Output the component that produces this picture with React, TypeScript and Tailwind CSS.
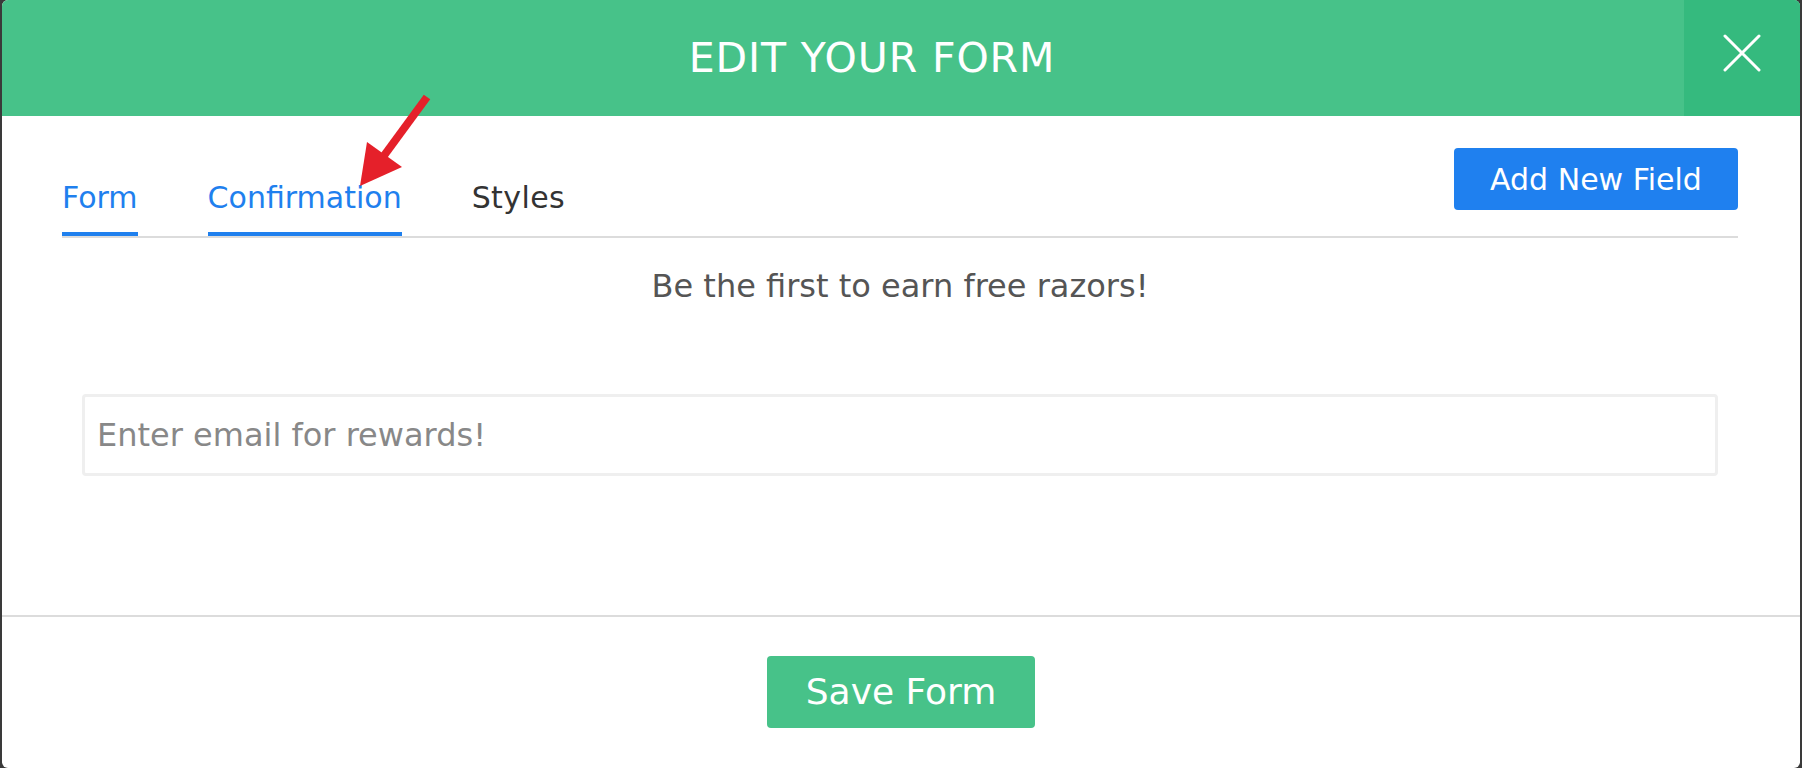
export default function App() {
  return (
    <div className="relative h-[768px] w-full bg-[#3a3a3a] px-[2px] font-['DejaVu_Sans',sans-serif]">
      <div className="flex h-full flex-col overflow-hidden rounded-[6px] bg-white">
        {/* header */}
        <div className="flex h-[116px] shrink-0 bg-[#47c289]">
          <div className="flex flex-1 items-center justify-center pl-[58px]">
            <h1 className="text-[41px] leading-none tracking-[0.9px] text-white">EDIT YOUR FORM</h1>
          </div>
          <button className="flex w-[116px] justify-center bg-[#35ba7e] pt-[34px]">
            <svg width="38" height="38" viewBox="0 0 38 38" fill="none" stroke="white" strokeWidth="3" strokeLinecap="round">
              <path d="M2 2 L36 36 M36 2 L2 36" />
            </svg>
          </button>
        </div>

        {/* body */}
        <div className="flex flex-1 flex-col border-b-2 border-[#dcdcdc] pl-[60px] pr-[62px] pt-[32px]">
          <div className="flex items-end justify-between border-b-2 border-[#dcdcdc]">
            <div className="flex gap-[70px] text-[30px] leading-[36px]">
              <span className="border-b-4 border-[#1f80ee] pb-[16px] text-[#1f80ee]">Form</span>
              <span className="border-b-4 border-[#1f80ee] pb-[16px] text-[#1f80ee]">Confirmation</span>
              <span className="border-b-4 border-transparent pb-[16px] tracking-[0.4px] text-[#333]">Styles</span>
            </div>
            <button className="mb-[26px] h-[62px] w-[284px] rounded-[4px] bg-[#1f80ef] text-[30px] text-white">
              Add New Field
            </button>
          </div>

          <p className="mt-[30px] text-center text-[32px] leading-[36px] text-[#555]">
            Be the first to earn free razors!
          </p>

          <div className="mx-[20px] mt-[90px]">
            <input
              type="text"
              placeholder="Enter email for rewards!"
              className="h-[82px] w-full rounded-[4px] border-[3px] border-[#efefef] bg-white pl-[12px] text-[32px] text-[#333] outline-none placeholder:text-[#888]"
            />
          </div>
        </div>

        {/* footer */}
        <div className="flex shrink-0 justify-center pb-[40px] pt-[39px]">
          <button className="h-[72px] w-[268px] rounded-[4px] bg-[#47c289] text-[36px] text-white">Save Form</button>
        </div>
      </div>

      {/* annotation arrow */}
      <svg className="pointer-events-none absolute left-0 top-0" width="1802" height="768">
        <line x1="427" y1="97" x2="383" y2="157" stroke="#e5202a" strokeWidth="8" />
        <polygon points="360,186 367,142 402,167" fill="#e5202a" />
      </svg>
    </div>
  );
}
